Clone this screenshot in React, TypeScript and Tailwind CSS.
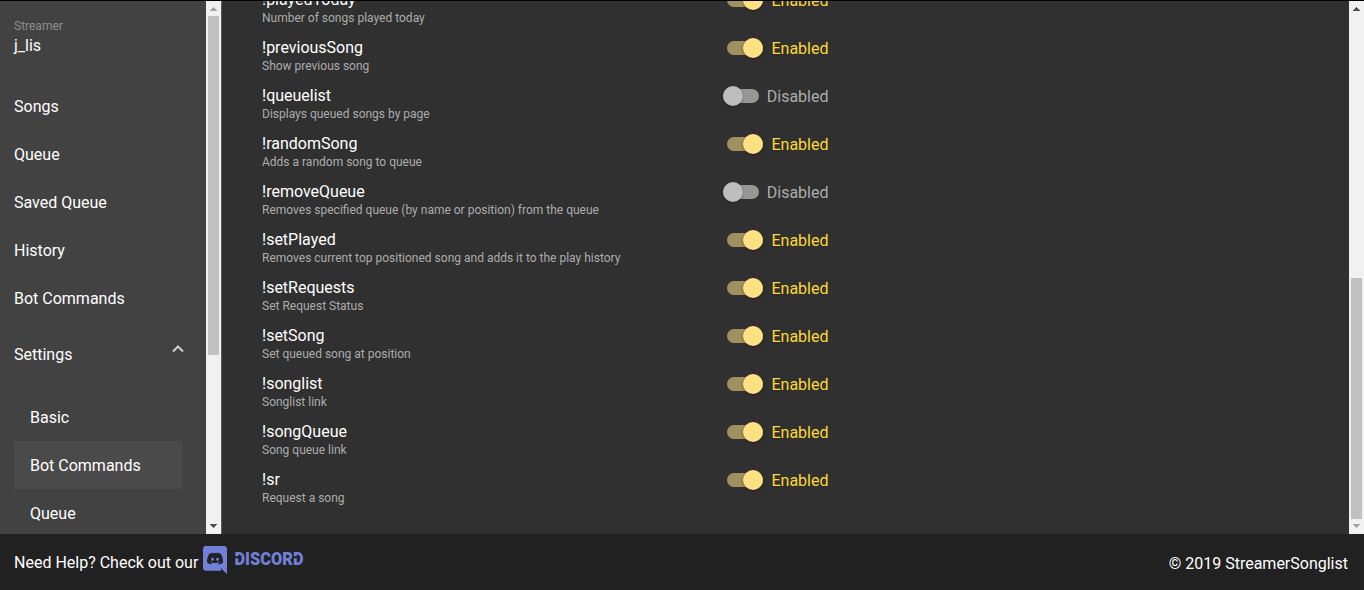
import React from "react";

type Command = { name: string; description: string; enabled: boolean };

const commands: Command[] = [
  { name: "!playedToday", description: "Number of songs played today", enabled: true },
  { name: "!previousSong", description: "Show previous song", enabled: true },
  { name: "!queuelist", description: "Displays queued songs by page", enabled: false },
  { name: "!randomSong", description: "Adds a random song to queue", enabled: true },
  { name: "!removeQueue", description: "Removes specified queue (by name or position) from the queue", enabled: false },
  { name: "!setPlayed", description: "Removes current top positioned song and adds it to the play history", enabled: true },
  { name: "!setRequests", description: "Set Request Status", enabled: true },
  { name: "!setSong", description: "Set queued song at position", enabled: true },
  { name: "!songlist", description: "Songlist link", enabled: true },
  { name: "!songQueue", description: "Song queue link", enabled: true },
  { name: "!sr", description: "Request a song", enabled: true },
];

const navItems = ["Songs", "Queue", "Saved Queue", "History", "Bot Commands"];

function Arrow({ down, color }: { down?: boolean; color: string }) {
  return (
    <svg width="15" height="15" viewBox="0 0 15 15" shapeRendering="crispEdges" className="shrink-0">
      <path
        d={down ? "M4 5h7v1h-1v1h-1v1h-1v1h-1v-1h-1v-1h-1v-1h-1z" : "M7 6h1v1h1v1h1v1h1v1h-7v-1h1v-1h1v-1h1z"}
        fill={color}
      />
    </svg>
  );
}

function Toggle({ enabled }: { enabled: boolean }) {
  return (
    <div className="flex h-6 items-center gap-2">
      <div
        className={
          enabled
            ? "flex h-[14px] w-9 items-center justify-end rounded-full bg-[#a09160]"
            : "flex h-[14px] w-9 items-center rounded-full bg-[#979797]"
        }
      >
        <div
          className={
            enabled
              ? "size-5 shrink-0 rounded-full bg-[#ffe082] shadow-[0_1px_3px_rgba(0,0,0,0.35)]"
              : "size-5 shrink-0 rounded-full bg-[#bdbdbd] shadow-[0_1px_3px_rgba(0,0,0,0.35)]"
          }
        />
      </div>
      <span className={enabled ? "pt-0.5 leading-6 text-[#fdd835]" : "pt-0.5 leading-6 text-[#acacac]"}>
        {enabled ? "Enabled" : "Disabled"}
      </span>
    </div>
  );
}

function CommandRow({ command }: { command: Command }) {
  return (
    <div className="flex h-12 w-[566.5px] shrink-0 items-start justify-between">
      <div className="flex flex-col pt-[15px]">
        <span className="h-5 leading-5 text-white">{command.name}</span>
        <span className="h-4 text-xs leading-4 text-[#acacac]">{command.description}</span>
      </div>
      <div className="pt-[13px]">
        <Toggle enabled={command.enabled} />
      </div>
    </div>
  );
}

function DiscordLogo() {
  return (
    <div className="flex items-start">
      <svg width="24" height="28" viewBox="0 0 448 512" fill="#7280da" preserveAspectRatio="none">
        <path d="M297.216 243.2c0 15.616-11.52 28.416-26.112 28.416-14.336 0-26.112-12.8-26.112-28.416s11.52-28.416 26.112-28.416c14.592 0 26.112 12.8 26.112 28.416zm-119.552-28.416c-14.592 0-26.112 12.8-26.112 28.416s11.776 28.416 26.112 28.416c14.592 0 26.112-12.8 26.112-28.416.256-15.616-11.52-28.416-26.112-28.416zM448 52.736V512c-64.494-56.994-43.868-38.128-118.784-107.776l13.568 47.36H52.48C23.552 451.584 0 428.032 0 398.848V52.736C0 23.552 23.552 0 52.48 0h343.04C424.448 0 448 23.552 448 52.736zm-72.96 242.688c0-82.432-36.864-149.248-36.864-149.248-36.864-27.648-71.936-26.88-71.936-26.88l-3.584 4.096c43.52 13.312 63.744 32.512 63.744 32.512-60.811-33.329-132.244-33.335-191.232-7.424-9.472 4.352-15.104 7.424-15.104 7.424s21.248-20.224 67.328-33.536l-2.56-3.072s-35.072-.768-71.936 26.88c0 0-36.864 66.816-36.864 149.248 0 0 21.504 37.12 78.08 38.912 0 0 9.472-11.52 17.152-21.248-32.512-9.728-44.8-30.208-44.8-30.208 3.766 2.636 9.976 6.053 10.496 6.4 43.21 24.198 104.588 32.126 159.744 8.96 8.96-3.328 18.944-8.192 29.44-15.104 0 0-12.8 20.992-46.336 30.464 7.68 9.728 16.896 20.736 16.896 20.736 56.576-1.792 78.336-38.912 78.336-38.912z" />
      </svg>
      <svg width="72" height="26" viewBox="0 0 72 26" className="ml-[7px]">
        <text
          x="0.5"
          y="18.8"
          textLength="69"
          lengthAdjust="spacingAndGlyphs"
          fill="#7280da"
          className="font-['Roboto',sans-serif] text-[17.5px] font-black"
        >
          DISCORD
        </text>
        <path d="M0.5 10.2h5v2h-5zM59 10.2h5v2h-5z" fill="#212121" />
      </svg>
    </div>
  );
}

export default function App() {
  return (
    <div className="flex h-[590px] w-[1364px] flex-col overflow-hidden border-t border-black bg-[#303030] font-['Roboto',sans-serif] text-base text-white">
      <div className="flex h-[533px] shrink-0">
        <aside className="flex w-[206px] flex-col overflow-hidden bg-[#424242] pl-3.5">
          <div className="mt-[17px] h-4 text-xs leading-4 text-[#8e8e8e]">Streamer</div>
          <div className="h-6 leading-6">j_lis</div>
          <nav className="mt-6 flex shrink-0 flex-col">
            {navItems.map((item) => (
              <a key={item} className="flex h-12 items-center pt-0.5">
                {item}
              </a>
            ))}
            <div className="flex h-16 items-center justify-between pt-0.5 pr-[22px]">
              <span>Settings</span>
              <svg width="12" height="8" viewBox="0 0 12 8" fill="none" stroke="#d0d0d0" strokeWidth="2" className="-translate-y-[6px]">
                <path d="M1 6.5L6 1.5L11 6.5" />
              </svg>
            </div>
            <div className="mt-[7px] flex w-[168px] flex-col">
              <a className="flex h-12 items-center pt-0.5 pl-4">Basic</a>
              <a className="flex h-12 items-center bg-[#4a4a4a] pt-0.5 pl-4">Bot Commands</a>
              <a className="flex h-12 items-center pt-0.5 pl-4">Queue</a>
            </div>
          </nav>
        </aside>
        <div className="flex w-[15px] shrink-0 flex-col bg-[#f1f1f1]">
          <Arrow color="#a3a3a3" />
          <div className="mx-0.5 h-[339px] bg-[#c1c1c1]" />
          <div className="mt-auto h-[15px]">
            <Arrow down color="#505050" />
          </div>
        </div>
        <main className="flex flex-1 flex-col overflow-hidden border-l border-[#5b5b5b] pl-10">
          <div className="-mt-[26px] flex flex-col">
            {commands.map((command) => (
              <CommandRow key={command.name} command={command} />
            ))}
          </div>
        </main>
        <div className="flex w-[15px] shrink-0 flex-col bg-[#f1f1f1]">
          <Arrow color="#505050" />
          <div className="mx-0.5 mt-auto h-[241px] bg-[#c1c1c1]" />
          <Arrow down color="#a3a3a3" />
        </div>
      </div>
      <footer className="flex h-14 shrink-0 items-start justify-between bg-[#212121] pl-3.5 pr-4">
        <div className="flex">
          <span className="mt-[17px] mr-[5px] leading-6">Need Help? Check out our</span>
          <div className="mt-3">
            <DiscordLogo />
          </div>
        </div>
        <span className="mt-[18px] leading-6">© 2019 StreamerSonglist</span>
      </footer>
    </div>
  );
}
